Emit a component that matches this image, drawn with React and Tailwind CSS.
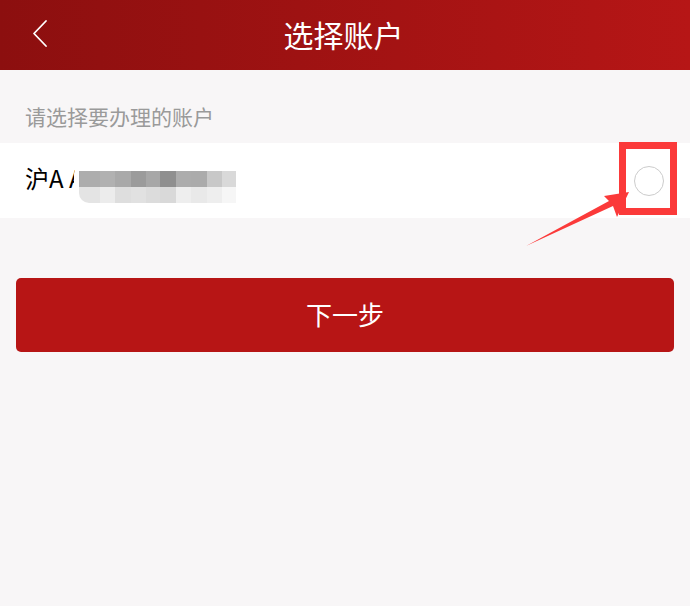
import React from "react";

const topCells = [
  "w-[21px] bg-[#adadad]",
  "w-[15px] bg-[#b1b1b1]",
  "w-[16px] bg-[#a9a9a9]",
  "w-[15px] bg-[#9b9b9b]",
  "w-[14px] bg-[#a7a7a7]",
  "w-[16px] bg-[#8f8f8f]",
  "w-[15px] bg-[#acacac]",
  "w-[16px] bg-[#ababab]",
  "w-[15px] bg-[#c8c8c8]",
  "w-[14px] bg-[#d9d9d9]",
];
const bottomCells = [
  "w-[21px] bg-[#e4e4e4]",
  "w-[15px] bg-[#ececec]",
  "w-[16px] bg-[#dedede]",
  "w-[15px] bg-[#e1e1e1]",
  "w-[14px] bg-[#dcdcdc]",
  "w-[16px] bg-[#d9d9d9]",
  "w-[15px] bg-[#eeeeee]",
  "w-[16px] bg-[#e9e9e9]",
  "w-[15px] bg-[#eeeeee]",
  "w-[14px] bg-[#f6f6f6]",
];

export default function App() {
  return (
    <div className="relative w-[690px] h-[606px] bg-[#f8f6f7] overflow-hidden font-['Noto_Sans_CJK_SC','Noto_Sans',sans-serif]">
      <header className="relative h-[70px] flex items-center justify-center bg-gradient-to-r from-[#8c0f0f] to-[#b61616]">
        <svg className="absolute left-[31px] top-[19px]" width="18" height="29" viewBox="0 0 18 29" fill="none">
          <path d="M15 2 L3 14.5 L15 27" stroke="#ffffff" strokeWidth="1.8" strokeLinecap="round" strokeLinejoin="round" />
        </svg>
        <h1 className="text-white text-[30px] leading-none -mt-[3px] -ml-[3px]">选择账户</h1>
      </header>

      <div className="h-[73px] flex items-center pt-[20px] pl-[25px]">
        <span className="text-[#9a9a9a] text-[21px] leading-none">请选择要办理的账户</span>
      </div>

      <div className="relative h-[75px] bg-white flex items-center justify-between pl-[25px] pr-[26px]">
        <span className="text-black text-[24px] leading-none -mt-[5px]">沪A A</span>
        <div className="absolute left-[74px] top-[20px] bg-white rounded-[12px] pl-[5px] pr-[4px] pt-[8px] pb-[3px]">
          <div className="flex flex-col rounded-bl-[10px] overflow-hidden">
            <div className="flex h-[16px]">
              {topCells.map((c, i) => (
                <div key={i} className={c} />
              ))}
            </div>
            <div className="flex h-[16px]">
              {bottomCells.map((c, i) => (
                <div key={i} className={c} />
              ))}
            </div>
          </div>
        </div>
        <div className="w-[30px] h-[30px] rounded-full border-[1.5px] border-[#cccccc] mt-[1px]" />
      </div>

      <div className="px-[16px] pt-[60px]">
        <button className="w-full h-[74px] rounded-[5px] bg-[#b71515] text-white text-[26px] leading-none flex items-center justify-center pb-[2px]">
          下一步
        </button>
      </div>

      {/* annotation box */}
      <div className="absolute left-[619px] top-[142px] w-[58px] h-[73px] border-[7px] border-[#fb3a3a]" />
      {/* annotation arrow */}
      <svg className="absolute left-0 top-0" width="690" height="606" viewBox="0 0 690 606">
        <polygon points="526,246 609,201 604,196 629,192 617,217 613,206" fill="#fb3a3a" />
      </svg>
    </div>
  );
}
